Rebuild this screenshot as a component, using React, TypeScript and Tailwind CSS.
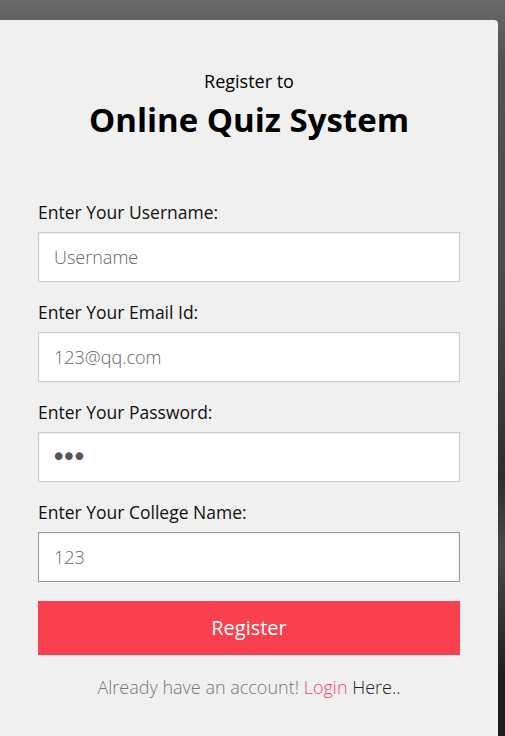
import { useState } from 'react';

const fields = [
  { label: 'Enter Your Username:', type: 'text', placeholder: 'Username', value: '' },
  { label: 'Enter Your Email Id:', type: 'email', placeholder: 'Email', value: '123@qq.com' },
  { label: 'Enter Your Password:', type: 'password', placeholder: 'Password', value: '123' },
  { label: 'Enter Your College Name:', type: 'text', placeholder: 'College', value: '123' },
];

export default function App() {
  const [values, setValues] = useState(fields.map((f) => f.value));

  return (
    <div
      className="h-[736px] overflow-hidden pt-5 bg-[#4a4a4a] bg-[linear-gradient(180deg,#6a6a6a_0%,#525252_8%,#4a4a4a_40%,#2e2e2e_65%,#4a4a4a_75%,#1e1e1e_92%,#1e1e1e_100%)]"
      style={{ fontFamily: '"Open Sans", "Noto Sans", sans-serif' }}
    >
      <div className="w-[498px] h-[740px] bg-[#f0f0f0] rounded-tr-[4px] px-[38px] pt-[50px]">
        <div className="text-center text-black">
          <p className="text-[18px] leading-[22px]">Register to</p>
          <h1 className="mt-[8px] text-[33px] leading-[40px] font-bold">Online Quiz System</h1>
        </div>

        <form className="mt-[60px] flex flex-col gap-[18px]" onSubmit={(e) => e.preventDefault()}>
          {fields.map((f, i) => (
            <div key={f.label}>
              <label className="block text-[17.5px] leading-[24px] text-[#111] mb-[8px]">{f.label}</label>
              <input
                type={f.type}
                value={values[i]}
                placeholder={f.placeholder}
                onChange={(e) => {
                  const next = [...values];
                  next[i] = e.target.value;
                  setValues(next);
                }}
                style={f.type === 'password' ? { fontFamily: '"DejaVu Sans", sans-serif' } : undefined}
                className={`w-full h-[50px] bg-white outline-none shadow-[inset_0_1px_2px_rgba(0,0,0,0.08)] border ${
                  f.type === 'password'
                    ? 'pl-[12px] pr-[15px] text-[26px] tracking-[-5px] text-[#555]'
                    : 'px-[15px] text-[18px] font-light text-[#666] placeholder:text-[#666]'
                } ${i === 3 ? 'border-[#999]' : 'border-[#ccc]'}`}
              />
            </div>
          ))}

          <button
            type="submit"
            className="mt-[1px] h-[54px] w-full bg-[#f8404f] text-white text-[20px] font-medium"
          >
            Register
          </button>
        </form>

        <p className="mt-[19px] text-center text-[18px] font-light text-[#777]">
          Already have an account! <a className="text-[#f8406f]">Login</a>{' '}
          <span className="text-[#222]">Here..</span>
        </p>
      </div>
    </div>
  );
}
